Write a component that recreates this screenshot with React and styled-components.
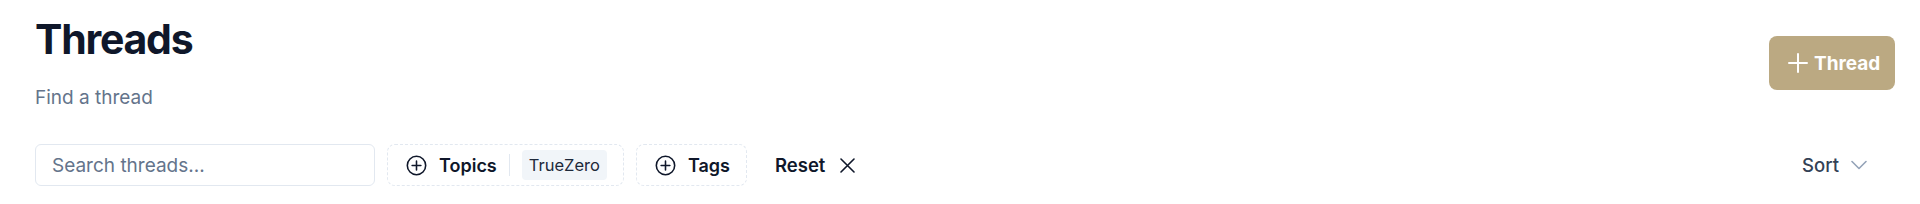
import React from 'react';
import styled, { createGlobalStyle } from 'styled-components';

const GlobalStyle = createGlobalStyle`
  html, body {
    margin: 0;
    padding: 0;
    background: #ffffff;
    font-family: Inter, "Noto Sans", sans-serif;
    color: #0f172a;
  }
  * { box-sizing: border-box; }
`;

const Page = styled.div`
  padding: 14px 25px 0 35px;
`;

const Header = styled.header`
  display: flex;
  align-items: center;
  justify-content: space-between;
`;

const Title = styled.h1`
  margin: 0;
  font-size: 41px;
  line-height: 50px;
  font-weight: 700;
  letter-spacing: -0.03em;
  color: #0f172a;
`;

const Subtitle = styled.p`
  margin: 20px 0 0;
  font-size: 19px;
  line-height: 28px;
  color: #64748b;
`;

const PrimaryButton = styled.button`
  display: flex;
  align-items: center;
  gap: 6px;
  width: 126px;
  height: 54px;
  padding: 0 0 0 19px;
  border: none;
  border-radius: 8px;
  background: #bba982;
  color: #ffffff;
  font-family: inherit;
  font-size: 19px;
  font-weight: 700;
`;

const Toolbar = styled.div`
  display: flex;
  align-items: center;
  gap: 12px;
  margin-top: 32px;
`;

const SearchInput = styled.input`
  width: 340px;
  height: 42px;
  padding: 0 16px;
  border: 1px solid #e2e8f0;
  border-radius: 6px;
  font-family: inherit;
  font-size: 19px;
  color: #0f172a;
  &::placeholder { color: #64748b; }
`;

const FilterButton = styled.button`
  display: flex;
  align-items: center;
  height: 42px;
  padding: 0 16px 0 18px;
  border: 1px dashed #e2e8f0;
  border-radius: 8px;
  background: #ffffff;
  font-family: inherit;
  font-size: 18px;
  font-weight: 600;
  color: #0f172a;
  gap: 12px;
`;

const Separator = styled.span`
  width: 1px;
  height: 22px;
  background: #e2e8f0;
`;

const Badge = styled.span`
  display: inline-flex;
  align-items: center;
  height: 30px;
  padding: 0 7px;
  border-radius: 4px;
  background: #f1f5f9;
  font-size: 16.5px;
  font-weight: 400;
  color: #1e293b;
`;

const GhostButton = styled.button`
  display: flex;
  align-items: center;
  gap: ${(p) => p.$gap || 15}px;
  height: 42px;
  padding: ${(p) => p.$pad || '0 16px'};
  border: none;
  background: transparent;
  font-family: inherit;
  font-size: 18.5px;
  font-weight: ${(p) => p.$weight || 600};
  color: ${(p) => p.$color || '#0f172a'};
`;

const Spacer = styled.div`
  flex: 1;
`;

const PlusCircle = () => (
  <svg width="21" height="21" viewBox="0 0 24 24" fill="none" stroke="currentColor" strokeWidth="1.8" strokeLinecap="round">
    <circle cx="12" cy="12" r="10.5" />
    <path d="M12 7v10M7 12h10" />
  </svg>
);

const Plus = () => (
  <svg width="20" height="20" viewBox="0 0 20 20" fill="none" stroke="currentColor" strokeWidth="2" strokeLinecap="round">
    <path d="M10 1v18M1 10h18" />
  </svg>
);

const Cross = () => (
  <svg width="15" height="15" viewBox="0 0 15 15" fill="none" stroke="currentColor" strokeWidth="1.6" strokeLinecap="round">
    <path d="M1 1l13 13M14 1L1 14" />
  </svg>
);

const Chevron = () => (
  <svg width="16" height="10" viewBox="0 0 16 10" fill="none" stroke="#94a3b8" strokeWidth="1.6" strokeLinecap="round" strokeLinejoin="round">
    <path d="M1 1.5l7 7 7-7" />
  </svg>
);

export default function App() {
  return (
    <Page>
      <GlobalStyle />
      <Header>
        <div>
          <Title>Threads</Title>
          <Subtitle>Find a thread</Subtitle>
        </div>
        <PrimaryButton>
          <Plus />
          Thread
        </PrimaryButton>
      </Header>
      <Toolbar>
        <SearchInput placeholder="Search threads..." />
        <FilterButton>
          <PlusCircle />
          Topics
          <Separator />
          <Badge>TrueZero</Badge>
        </FilterButton>
        <FilterButton>
          <PlusCircle />
          Tags
        </FilterButton>
        <GhostButton>
          Reset
          <Cross />
        </GhostButton>
        <Spacer />
        <GhostButton $weight={500} $color="#334155" $pad="0 28px 0 16px" $gap={12}>
          Sort
          <Chevron />
        </GhostButton>
      </Toolbar>
    </Page>
  );
}
